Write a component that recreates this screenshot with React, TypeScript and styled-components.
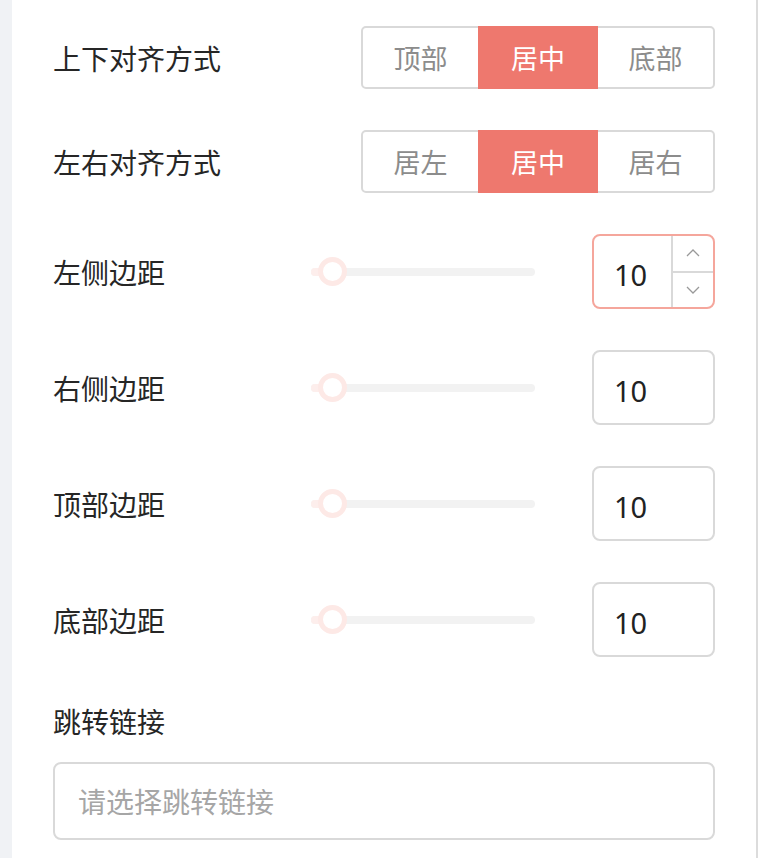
import React from "react";
import styled, { createGlobalStyle } from "styled-components";

const Global = createGlobalStyle`
  html, body { margin: 0; padding: 0; background: #f0f2f5; }
  body { font-family: "Noto Sans CJK SC", "Noto Sans", sans-serif; }
  * { box-sizing: border-box; }
`;

const Page = styled.div`
  display: flex;
  min-height: 858px;
  padding-left: 12px;
`;

const Panel = styled.div`
  width: 746px;
  min-height: 858px;
  background: #fff;
  border-right: 2px solid #dcdcdc;
  padding: 26px 41px 0 41px;
  display: flex;
  flex-direction: column;
  gap: 41px;
`;

const Row = styled.div`
  display: grid;
  grid-template-columns: 258px 224px 1fr;
  align-items: center;
`;

const SegRow = styled.div`
  display: flex;
  align-items: center;
  justify-content: space-between;
`;

const Label = styled.div`
  font-size: 28px;
  line-height: 46px;
  color: #262626;
  white-space: nowrap;
`;

const Segmented = styled.div`
  display: flex;
  height: 63px;
`;

const Seg = styled.div<{ $active?: boolean; $w: number; $pos: "first" | "mid" | "last" }>`
  width: ${(p) => p.$w}px;
  height: 63px;
  display: flex;
  align-items: center;
  justify-content: center;
  font-size: 27px;
  color: ${(p) => (p.$active ? "#fff" : "#8c8c8c")};
  background: ${(p) => (p.$active ? "#ee786e" : "#fff")};
  border: 2px solid ${(p) => (p.$active ? "#ee786e" : "#d9d9d9")};
  margin-left: ${(p) => (p.$pos === "first" ? 0 : -2)}px;
  position: relative;
  z-index: ${(p) => (p.$active ? 1 : 0)};
  border-radius: ${(p) =>
    p.$pos === "first" ? "5px 0 0 5px" : p.$pos === "last" ? "0 5px 5px 0" : "0"};
`;

const Track = styled.div`
  position: relative;
  height: 8px;
  border-radius: 4px;
  background: #f2f2f2;
`;

const TrackFill = styled.div`
  position: absolute;
  left: 0;
  top: 0;
  height: 8px;
  border-radius: 4px 0 0 4px;
  background: #fdeeec;
`;

const Handle = styled.div`
  position: absolute;
  top: 50%;
  width: 29px;
  height: 29px;
  margin-left: -14.5px;
  margin-top: -14.5px;
  border-radius: 50%;
  background: #fff;
  border: 5px solid #fde9e6;
`;

const NumBox = styled.div<{ $focus?: boolean }>`
  justify-self: end;
  width: 123px;
  height: 75px;
  border: 2px solid ${(p) => (p.$focus ? "#f5a69c" : "#d9d9d9")};
  border-radius: 8px;
  display: flex;
  overflow: hidden;
  background: #fff;
`;

const NumValue = styled.div`
  flex: 1;
  display: flex;
  align-items: center;
  padding-left: 20px;
  padding-top: 5px;
  font-family: "Noto Sans", "Open Sans", sans-serif;
  font-size: 29px;
  color: #222;
`;

const Stepper = styled.div`
  width: 42px;
  border-left: 2px solid #d9d9d9;
  display: flex;
  flex-direction: column;
`;

const StepBtn = styled.div<{ $top?: boolean }>`
  flex: 1;
  display: flex;
  align-items: center;
  justify-content: center;
  border-bottom: ${(p) => (p.$top ? "2px solid #d9d9d9" : "none")};
`;

const LinkField = styled.div`
  display: flex;
  flex-direction: column;
  gap: 18px;
`;

const TextInput = styled.div`
  height: 78px;
  border: 2px solid #d9d9d9;
  border-radius: 8px;
  display: flex;
  align-items: center;
  padding-left: 23px;
  font-size: 28px;
  color: #a6a6a6;
`;

const Chevron = ({ up }: { up?: boolean }) => (
  <svg width="14" height="8" viewBox="0 0 14 8">
    <polyline
      points={up ? "1,7 7,1 13,7" : "1,1 7,7 13,1"}
      fill="none"
      stroke="#999"
      strokeWidth="1.3"
    />
  </svg>
);

const Segs = ({ items }: { items: string[] }) => (
  <Segmented>
    {items.map((t, i) => (
      <Seg
        key={t + i}
        $active={i === 1}
        $w={i === 1 ? 120 : 119}
        $pos={i === 0 ? "first" : i === 2 ? "last" : "mid"}
      >
        {t}
      </Seg>
    ))}
  </Segmented>
);

const SliderRow = ({ label, focus }: { label: string; focus?: boolean }) => (
  <Row>
    <Label>{label}</Label>
    <Track>
      <TrackFill style={{ width: 21 }} />
      <Handle style={{ left: 21 }} />
    </Track>
    <NumBox $focus={focus}>
      <NumValue>10</NumValue>
      {focus && (
        <Stepper>
          <StepBtn $top>
            <Chevron up />
          </StepBtn>
          <StepBtn>
            <Chevron />
          </StepBtn>
        </Stepper>
      )}
    </NumBox>
  </Row>
);

export default function App() {
  return (
    <>
      <Global />
      <Page>
        <Panel>
          <SegRow>
            <Label>上下对齐方式</Label>
            <Segs items={["顶部", "居中", "底部"]} />
          </SegRow>
          <SegRow>
            <Label>左右对齐方式</Label>
            <Segs items={["居左", "居中", "居右"]} />
          </SegRow>
          <SliderRow label="左侧边距" focus />
          <SliderRow label="右侧边距" />
          <SliderRow label="顶部边距" />
          <SliderRow label="底部边距" />
          <LinkField>
            <Label>跳转链接</Label>
            <TextInput>请选择跳转链接</TextInput>
          </LinkField>
        </Panel>
      </Page>
    </>
  );
}
